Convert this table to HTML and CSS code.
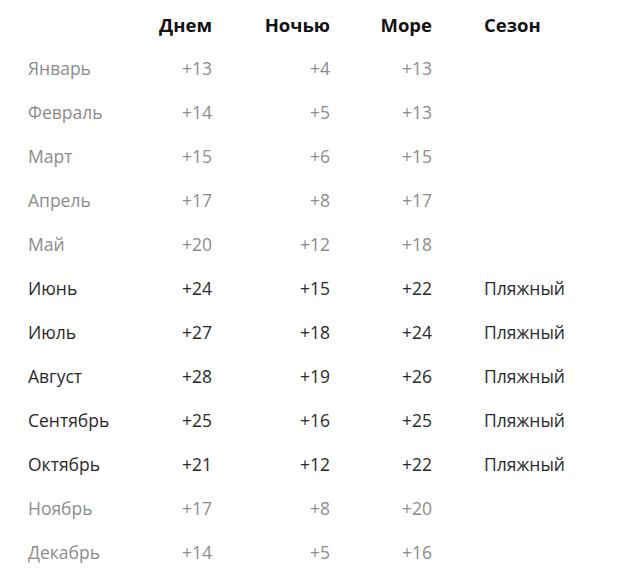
FILE: index.html
```html
<!DOCTYPE html>
<html lang="ru">
<head>
<meta charset="utf-8">
<link rel="stylesheet" href="styles.css">
</head>
<body>
<div class="climate">
  <div class="row head">
    <div class="c month"></div><div class="c num">Днем</div><div class="c num">Ночью</div><div class="c num">Море</div><div class="c season">Сезон</div>
  </div>
  <div class="row off"><div class="c month">Январь</div><div class="c num">+13</div><div class="c num">+4</div><div class="c num">+13</div><div class="c season"></div></div>
  <div class="row off"><div class="c month">Февраль</div><div class="c num">+14</div><div class="c num">+5</div><div class="c num">+13</div><div class="c season"></div></div>
  <div class="row off"><div class="c month">Март</div><div class="c num">+15</div><div class="c num">+6</div><div class="c num">+15</div><div class="c season"></div></div>
  <div class="row off"><div class="c month">Апрель</div><div class="c num">+17</div><div class="c num">+8</div><div class="c num">+17</div><div class="c season"></div></div>
  <div class="row off"><div class="c month">Май</div><div class="c num">+20</div><div class="c num">+12</div><div class="c num">+18</div><div class="c season"></div></div>
  <div class="row on"><div class="c month">Июнь</div><div class="c num">+24</div><div class="c num">+15</div><div class="c num">+22</div><div class="c season">Пляжный</div></div>
  <div class="row on"><div class="c month">Июль</div><div class="c num">+27</div><div class="c num">+18</div><div class="c num">+24</div><div class="c season">Пляжный</div></div>
  <div class="row on"><div class="c month">Август</div><div class="c num">+28</div><div class="c num">+19</div><div class="c num">+26</div><div class="c season">Пляжный</div></div>
  <div class="row on"><div class="c month">Сентябрь</div><div class="c num">+25</div><div class="c num">+16</div><div class="c num">+25</div><div class="c season">Пляжный</div></div>
  <div class="row on"><div class="c month">Октябрь</div><div class="c num">+21</div><div class="c num">+12</div><div class="c num">+22</div><div class="c season">Пляжный</div></div>
  <div class="row off"><div class="c month">Ноябрь</div><div class="c num">+17</div><div class="c num">+8</div><div class="c num">+20</div><div class="c season"></div></div>
  <div class="row off"><div class="c month">Декабрь</div><div class="c num">+14</div><div class="c num">+5</div><div class="c num">+16</div><div class="c season"></div></div>
</div>
</body>
</html>
```
FILE: styles.css
```css
html, body {
  margin: 0;
  padding: 0;
  background: #ffffff;
}
body {
  font-family: "Open Sans", "Noto Sans", "DejaVu Sans", sans-serif;
  font-size: 17.5px;
}
.climate {
  padding: 2px 0 0 28px;
}
.row {
  display: grid;
  grid-template-columns: 120px 64px 118px 102px 1fr;
  height: 44px;
  align-items: center;
}
.c.num {
  text-align: right;
}
.c.season {
  padding-left: 52px;
}
.head {
  font-weight: 700;
  font-size: 18.5px;
  color: #111111;
}
.off {
  color: #8c8c8c;
}
.on {
  color: #2a2a2a;
}
```
